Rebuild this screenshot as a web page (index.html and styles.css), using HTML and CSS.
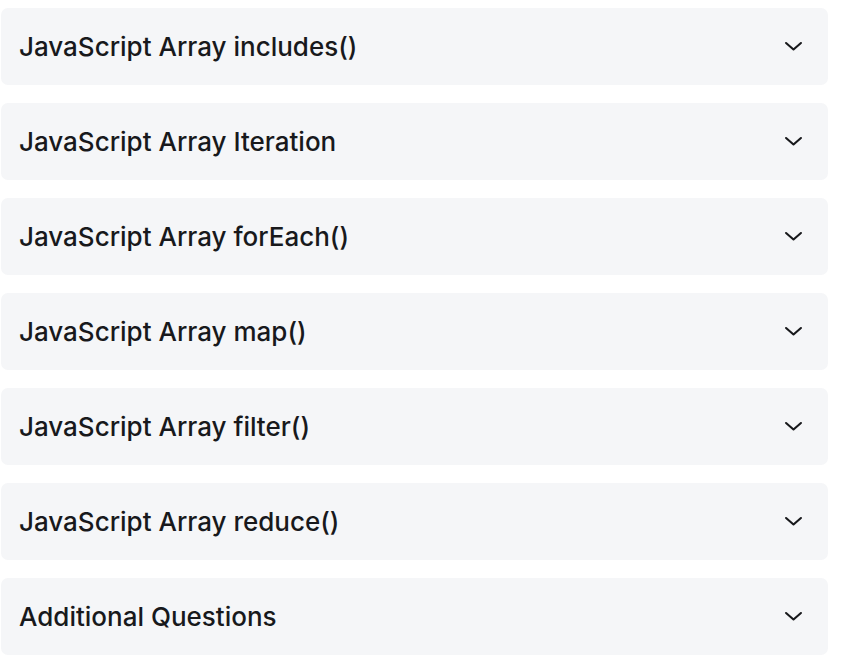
FILE: index.html
```html
<!DOCTYPE html>
<html lang="en">
<head>
<meta charset="utf-8">
<title>FAQ</title>
<link rel="stylesheet" href="styles.css">
</head>
<body>
<div class="faq">
  <div class="item"><span class="title">JavaScript Array includes()</span><svg class="chev" viewBox="0 0 16 8"><path d="M1 1l7 6 7-6"/></svg></div>
  <div class="item"><span class="title">JavaScript Array Iteration</span><svg class="chev" viewBox="0 0 16 8"><path d="M1 1l7 6 7-6"/></svg></div>
  <div class="item"><span class="title">JavaScript Array forEach()</span><svg class="chev" viewBox="0 0 16 8"><path d="M1 1l7 6 7-6"/></svg></div>
  <div class="item"><span class="title">JavaScript Array map()</span><svg class="chev" viewBox="0 0 16 8"><path d="M1 1l7 6 7-6"/></svg></div>
  <div class="item"><span class="title">JavaScript Array filter()</span><svg class="chev" viewBox="0 0 16 8"><path d="M1 1l7 6 7-6"/></svg></div>
  <div class="item"><span class="title">JavaScript Array reduce()</span><svg class="chev" viewBox="0 0 16 8"><path d="M1 1l7 6 7-6"/></svg></div>
  <div class="item"><span class="title">Additional Questions</span><svg class="chev" viewBox="0 0 16 8"><path d="M1 1l7 6 7-6"/></svg></div>
</div>
</body>
</html>
```
FILE: styles.css
```css
html, body { margin: 0; padding: 0; background: #fff; }
body { font-family: Inter, "Noto Sans", sans-serif; color: #18191c; }
.faq {
  display: flex;
  flex-direction: column;
  gap: 18px;
  width: 827px;
  margin: 8px 0 0 1px;
}
.item {
  height: 77px;
  box-sizing: border-box;
  background: #f5f6f8;
  border-radius: 7px;
  display: flex;
  align-items: center;
  justify-content: space-between;
  padding: 0 26px 0 18px;
}
.title {
  font-size: 26px;
  font-weight: 500;
  letter-spacing: 0;
}
.chev {
  width: 17px;
  height: 8.5px;
  fill: none;
  stroke: #18191c;
  stroke-width: 2;
  stroke-linecap: round;
  stroke-linejoin: round;
  overflow: visible;
}
```
